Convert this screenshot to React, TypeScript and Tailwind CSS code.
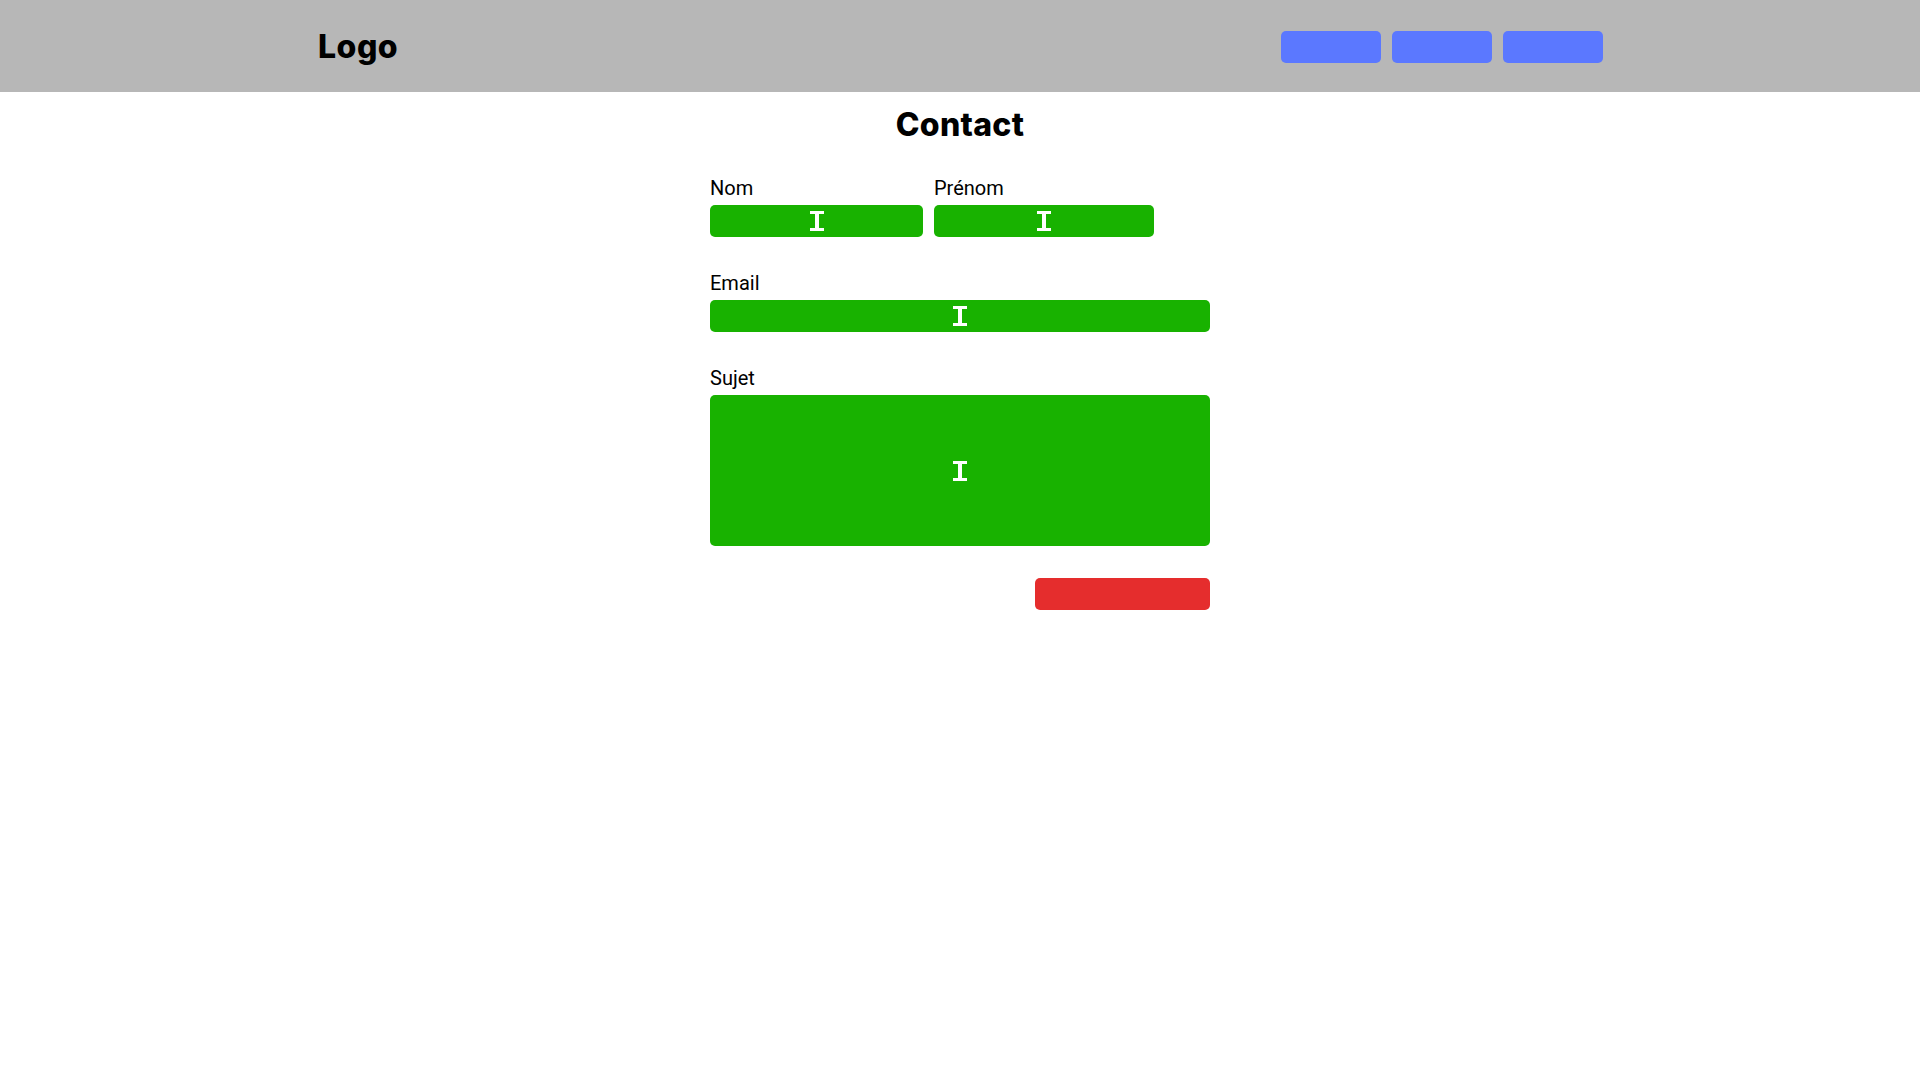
import React from 'react';

// curseur texte blanc au centre des champs
function TextCursor() {
  return (
    <svg width="14" height="20" viewBox="0 0 14 20" className="pointer-events-none">
      <rect x="0" y="0" width="14" height="3" fill="#fff" />
      <rect x="5" y="0" width="4" height="20" fill="#fff" />
      <rect x="0" y="17" width="14" height="3" fill="#fff" />
    </svg>
  );
}

function Field({ label, width, height = 'h-[32px]' }: { label: string; width: string; height?: string }) {
  return (
    <div className={`flex flex-col ${width}`}>
      <label className="text-[20px] leading-[24px] text-black mb-[5px]">{label}</label>
      <div className={`${height} w-full bg-[#18b200] rounded-[5px] flex items-center justify-center`}>
        <TextCursor />
      </div>
    </div>
  );
}

export default function App() {
  return (
    <div className="min-h-screen bg-white font-['Roboto',sans-serif]">
      <header className="h-[92px] bg-[#b7b7b7] pt-[2px]">
        <div className="w-[1284px] mx-auto h-full flex items-center justify-between">
          <span className="font-['Inter',sans-serif] text-[32px] leading-[32px] font-extrabold text-black tracking-[0.5px]">
            Logo
          </span>
          <nav className="flex gap-[11px] translate-x-px">
            <button className="w-[100px] h-[32px] bg-[#5b78ff] rounded-[5px]" />
            <button className="w-[100px] h-[32px] bg-[#5b78ff] rounded-[5px]" />
            <button className="w-[100px] h-[32px] bg-[#5b78ff] rounded-[5px]" />
          </nav>
        </div>
      </header>

      <main className="flex flex-col items-center">
        <h1 className="mt-[17px] font-['Inter',sans-serif] text-[32px] leading-[32px] font-extrabold text-black tracking-[0.3px]">
          Contact
        </h1>

        <form className="mt-[35px] w-[500px] flex flex-col">
          <div className="flex gap-[11px]">
            <Field label="Nom" width="w-[213px]" />
            <Field label="Prénom" width="w-[220px]" />
          </div>

          <div className="mt-[34px]">
            <Field label="Email" width="w-full" />
          </div>

          <div className="mt-[34px]">
            <Field label="Sujet" width="w-full" height="h-[151px]" />
          </div>

          <div className="mt-[32px] flex justify-end">
            <button type="button" className="w-[175px] h-[32px] bg-[#e52d2d] rounded-[5px]" />
          </div>
        </form>
      </main>
    </div>
  );
}
